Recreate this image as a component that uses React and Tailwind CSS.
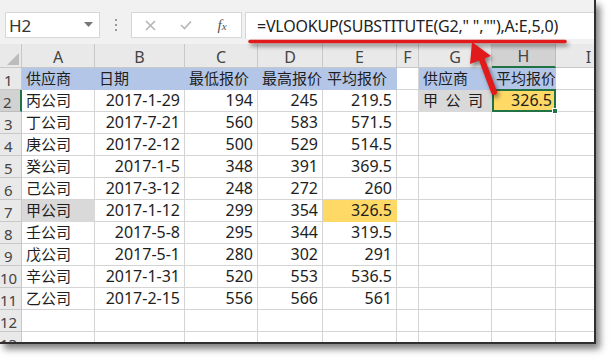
import React from "react";

const CJK = { fontFamily: '"Noto Sans", "Noto Sans CJK SC", sans-serif' };

const cols = [
  "w-[22px]", "w-[73px]", "w-[90px]", "w-[73px]", "w-[65px]", "w-[74px]",
  "w-[22px]", "w-[73px]", "w-[64px]", "w-[40px]",
];
const letters = ["A", "B", "C", "D", "E", "F", "G", "H", "I"];

const data = [
  ["丙公司", "2017-1-29", "194", "245", "219.5"],
  ["丁公司", "2017-7-21", "560", "583", "571.5"],
  ["庚公司", "2017-2-12", "500", "529", "514.5"],
  ["癸公司", "2017-1-5", "348", "391", "369.5"],
  ["己公司", "2017-3-12", "248", "272", "260"],
  ["甲公司", "2017-1-12", "299", "354", "326.5"],
  ["壬公司", "2017-5-8", "295", "344", "319.5"],
  ["戊公司", "2017-5-1", "280", "302", "291"],
  ["辛公司", "2017-1-31", "520", "553", "536.5"],
  ["乙公司", "2017-2-15", "556", "566", "561"],
];

function Cell({ w, children, right, fill, extra = "", h = "h-[22px]" }) {
  return (
    <div
      className={`${w} ${h} shrink-0 flex items-end overflow-hidden whitespace-nowrap border-r border-b ${
        fill || "border-[#d4d4d4] bg-white"
      } ${right ? "justify-end pr-[4px]" : "pl-[4px]"} pb-[3px] text-[#1e1e1e] ${extra}`}
    >
      {children}
    </div>
  );
}

function RowHead({ n, sel, h = "h-[22px]" }) {
  return (
    <div
      className={`w-[22px] ${h} shrink-0 flex items-end pb-[1px] text-[15px] leading-none text-[#444] border-b ${
        sel
          ? "bg-[#d2d2d2] border-[#bdbdbd] border-r-2 border-r-[#217346] pl-[3px]"
          : "bg-[#e9e9e9] border-[#c8c8c8] border-r border-r-[#c8c8c8] " + (n >= 10 ? "pl-0" : "pl-[4px]")
      }`}
    >
      {n}
    </div>
  );
}

export default function App() {
  const blue = "bg-[#b4c6e7] border-[#b4c6e7]";
  const grayFill = "bg-[#d9d9d9] border-[#d9d9d9]";
  const yellow = "bg-[#ffd966] border-[#ffd966]";
  return (
    <div className="w-[616px] h-[364px] bg-white overflow-hidden" style={CJK}>
      <div className="relative w-[596px] h-[344px] border-r-2 border-b-2 border-[#2f2f2f] shadow-[4px_5px_7px_rgba(0,0,0,0.5)] overflow-hidden bg-white">
        {/* Top bar */}
        <div className="h-[44px] bg-[#f1f1f1] flex items-start pt-[12px]">
          <div className="ml-[5px] w-[95px] h-[26px] bg-white border border-[#d6d6d6] flex items-center justify-between pl-[3px] pr-[6px]">
            <span className="text-[17px] text-[#333] leading-none">H2</span>
            <svg width="9" height="6" viewBox="0 0 9 6"><path d="M0 0 L9 0 L4.5 5 Z" fill="#777" /></svg>
          </div>
          <div className="w-[31px] h-[26px] flex flex-col items-center justify-center gap-[3px]">
            <div className="w-[2px] h-[2px] bg-[#9a9a9a]" />
            <div className="w-[2px] h-[2px] bg-[#9a9a9a]" />
            <div className="w-[2px] h-[2px] bg-[#9a9a9a]" />
          </div>
          <div className="w-[111px] h-[26px] bg-white border border-[#d6d6d6] flex items-center">
            <div className="w-[36px] flex justify-center">
              <svg width="11" height="11" viewBox="0 0 11 11"><path d="M1 1 L10 10 M10 1 L1 10" stroke="#b5b5b5" strokeWidth="1.6" /></svg>
            </div>
            <div className="w-[36px] flex justify-center">
              <svg width="12" height="10" viewBox="0 0 12 10"><path d="M1 5 L4.5 8.5 L11 1.5" stroke="#b5b5b5" strokeWidth="1.6" fill="none" /></svg>
            </div>
            <div className="w-[36px] flex justify-center">
              <span className="text-[15px] italic text-[#555] leading-none" style={{ fontFamily: '"Liberation Serif", serif' }}>
                f<span className="text-[11px]">x</span>
              </span>
            </div>
          </div>
          <div className="ml-[3px] flex-1 h-[27px] bg-white border-t border-l border-[#d6d6d6] flex items-center pl-[11px]">
            <span className="text-[16px] leading-none text-[#222] whitespace-nowrap tracking-[-0.2px]">
              =VLOOKUP(SUBSTITUTE(G2," ",""),A:E,5,0)
            </span>
          </div>
        </div>

        {/* Column headers */}
        <div className="flex h-[24px]">
          <div className="w-[22px] h-[24px] shrink-0 bg-[#e9e9e9] border-r border-b border-[#c8c8c8] flex items-end justify-end pr-[2px] pb-[2px]">
            <svg width="12" height="12" viewBox="0 0 12 12"><path d="M12 0 L12 12 L0 12 Z" fill="#bcbcbc" /></svg>
          </div>
          {letters.map((l, i) => (
            <div
              key={l}
              className={`${cols[i + 1]} h-[24px] shrink-0 flex items-end justify-center pb-[2px] text-[16px] leading-none text-[#444] border-r ${
                l === "H"
                  ? "bg-[#d2d2d2] border-[#bdbdbd] border-b-2 border-b-[#217346]"
                  : "bg-[#e9e9e9] border-[#c8c8c8] border-b border-b-[#c8c8c8]"
              }`}
            >
              {l === "I" ? <span className="ml-[26px]">I</span> : l}
            </div>
          ))}
        </div>

        {/* Row 1 */}
        <div className="flex">
          <RowHead n={1} />
          <Cell w={cols[1]} fill={blue} extra="text-[15px] leading-none">供应商</Cell>
          <Cell w={cols[2]} fill={blue} extra="text-[15px] leading-none">日期</Cell>
          <Cell w={cols[3]} fill={blue} extra="text-[15px] leading-none">最低报价</Cell>
          <Cell w={cols[4]} fill={blue} extra="text-[15px] leading-none">最高报价</Cell>
          <Cell w={cols[5]} fill={blue} extra="text-[15px] leading-none">平均报价</Cell>
          <Cell w={cols[6]} />
          <Cell w={cols[7]} fill={blue} extra="text-[15px] leading-none">供应商</Cell>
          <Cell w={cols[8]} fill={blue} extra="text-[15px] leading-none">平均报价</Cell>
          <Cell w={cols[9]} />
        </div>

        {data.map((r, idx) => {
          const n = idx + 2;
          const isSel = n === 2;
          return (
            <div className="flex" key={n}>
              <RowHead n={n} sel={isSel} />
              <Cell w={cols[1]} fill={n === 7 ? grayFill : undefined} extra="text-[15px] leading-none">{r[0]}</Cell>
              <Cell w={cols[2]} right extra="text-[16px] leading-none">{r[1]}</Cell>
              <Cell w={cols[3]} right extra="text-[16px] leading-none">{r[2]}</Cell>
              <Cell w={cols[4]} right extra="text-[16px] leading-none">{r[3]}</Cell>
              <Cell w={cols[5]} right fill={n === 7 ? yellow : undefined} extra="text-[16px] leading-none">{r[4]}</Cell>
              <Cell w={cols[6]} />
              {isSel ? (
                <Cell w={cols[7]} fill={grayFill} extra="text-[15px] leading-none">
                  <div className="w-full flex justify-between pr-[8px]">
                    <span>甲</span><span>公</span><span>司</span>
                  </div>
                </Cell>
              ) : (
                <Cell w={cols[7]} />
              )}
              {isSel ? (
                <div className="relative w-[64px] shrink-0 bg-[#ffd966] border-2 border-[#217346] flex items-end justify-end pr-[2px] pb-[2px] text-[16px] leading-none text-[#1e1e1e] -mt-[1px] h-[23px]">
                  326.5
                  <div className="absolute -right-[4px] -bottom-[4px] w-[6px] h-[6px] bg-[#217346] border border-white" />
                </div>
              ) : (
                <Cell w={cols[8]} />
              )}
              <Cell w={cols[9]} />
            </div>
          );
        })}

        {[12, 13].map((n) => (
          <div className="flex" key={n}>
            <RowHead n={n} />
            {cols.slice(1).map((w, i) => (
              <Cell key={i} w={w} />
            ))}
          </div>
        ))}

        {/* annotation overlay */}
        <svg
          className="absolute left-0 top-0 pointer-events-none drop-shadow-[2px_3px_2px_rgba(0,0,0,0.45)]"
          width="596"
          height="344"
          viewBox="0 0 596 344"
        >
          <line x1="250" y1="41.5" x2="565" y2="41.5" stroke="#e11b1b" strokeWidth="3.5" strokeLinecap="round" />
          <line x1="482" y1="60" x2="494" y2="92" stroke="#e11b1b" strokeWidth="6" strokeLinecap="round" />
          <path d="M472 42 L470 64 L491 56 Z" fill="#e11b1b" />
        </svg>
      </div>
    </div>
  );
}
